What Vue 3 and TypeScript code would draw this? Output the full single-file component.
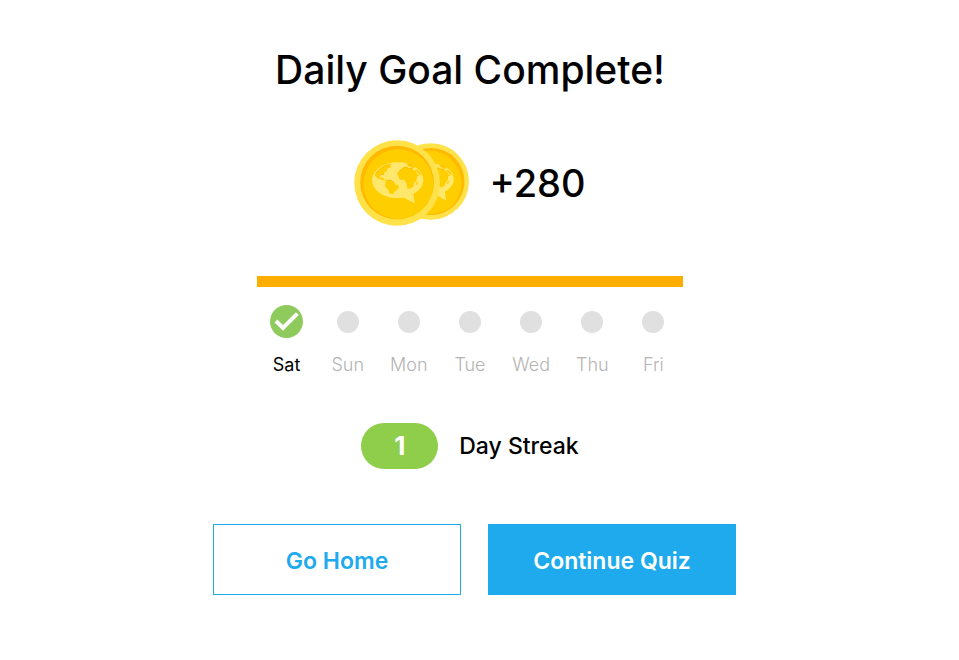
<script setup lang="ts">
interface Day {
  label: string
  done: boolean
}

const reward = 280
const streak = 1
const days: Day[] = ['Sat', 'Sun', 'Mon', 'Tue', 'Wed', 'Thu', 'Fri'].map((label, i) => ({
  label,
  done: i < streak,
}))
</script>

<template>
  <main class="goal">
    <h1 class="title">Daily Goal Complete!</h1>

    <div class="reward">
      <svg class="coins" viewBox="30 29 345 259" aria-hidden="true">
        <defs>
          <g id="globe">
            <path fill="#ffe76b" d="M161 96C204 96 238 120 238 150C238 167 226 181 208 191L212 220L179 202C173 204 167 204 161 204C118 204 84 180 84 150C84 120 118 96 161 96Z" />
            <g fill="#ffce00">
              <path d="M92 136C97 122 110 110 128 103L143 102L137 107L142 110L132 114L127 124L120 127L119 133L110 132L104 136L107 142L118 143L121 148L130 149L123 152L110 147L100 144Z" />
              <path d="M126 152L139 150L146 156L152 158L154 163L164 166L163 174L158 181L151 185L148 191L137 192L132 178L124 171L123 162Z" />
              <path d="M161 133L166 121L175 115L178 110L188 109L193 114L204 114L209 119L215 124L221 133L227 136L219 139L217 153L211 158L208 169L198 176L190 175L187 159L181 149L167 149Z" />
              <path d="M188 103L199 102L213 110L210 114L199 111L193 107Z" />
              <path d="M216 117L228 127L232 136L225 132L220 125L213 121Z" />
              <path d="M216 158L222 153L220 162L215 165Z" />
            </g>
            <path d="M94 134C103 116 116 108 139 103M120 128L118 133L108 132L105 140M127 152L139 150L150 157M161 133L167 121L178 113L189 112L194 115L206 115M190 103L202 104L212 111M218 119L229 131" fill="none" stroke="#ffbd08" stroke-width="3" />
          </g>
          <clipPath id="rear"><circle cx="261" cy="154" r="98" /></clipPath>
        </defs>
        <circle cx="260" cy="154" r="115.500" fill="#ffe14a" />
        <circle cx="261" cy="154" r="101" fill="#ffb900" />
        <g clip-path="url(#rear)">
          <circle cx="255" cy="159" r="98" fill="#ffce00" />
        </g>
        <use href="#globe" transform="translate(117 14) scale(.895)" />
        <circle cx="159" cy="158.500" r="129" fill="#ffe14a" />
        <circle cx="159" cy="157" r="111" fill="#ffb900" />
        <circle cx="163" cy="162" r="105" fill="#ffce00" />
        <use href="#globe" />
      </svg>
      <span class="amount">+{{ reward }}</span>
    </div>

    <section class="week" aria-label="Week">
      <div class="bar"></div>
      <ul class="days">
        <li v-for="day in days" :key="day.label" class="day" :class="{ done: day.done }">
          <span class="mark">
            <svg v-if="day.done" class="check" viewBox="0 0 99 99" aria-hidden="true">
              <circle cx="49.500" cy="49.500" r="49.500" fill="#8fca5c" />
              <path d="M18 48L39 69L82 26" fill="none" stroke="#fff" stroke-width="12" />
            </svg>
            <span v-else class="dot"></span>
          </span>
          <span>{{ day.label }}</span>
        </li>
      </ul>
    </section>

    <div class="streak">
      <span class="count">{{ streak }}</span>
      <span>Day Streak</span>
    </div>

    <div class="actions">
      <button type="button" class="button">Go Home</button>
      <button type="button" class="button primary">Continue Quiz</button>
    </div>
  </main>
</template>

<style>
body {
  margin: 0;
  background: #fff;
}
</style>

<style scoped>
.goal {
  display: flex;
  flex-direction: column;
  align-items: center;
  padding: 46px 19px 64px 0;
  color: #000;
  font-family: Inter, "Liberation Sans", sans-serif;
}

.title {
  margin: 0;
  font-size: 39px;
  font-weight: 500;
  line-height: 48px;
}

.reward {
  display: flex;
  align-items: center;
  gap: 20px;
  margin-top: 46px;
}

.coins {
  width: 115px;
  height: 86px;
}

.amount {
  font-size: 38px;
  font-weight: 500;
  line-height: 48px;
}

.week {
  width: 426px;
  max-width: 100%;
  margin-top: 50px;
}

.bar {
  height: 11px;
  background: #ffae00;
}

.days {
  display: grid;
  grid-template-columns: repeat(7, 1fr);
  margin: 18px -1px 0;
  padding: 0;
  list-style: none;
}

.day {
  display: flex;
  flex-direction: column;
  align-items: center;
  gap: 16px;
  color: #b4b4b4;
  font-size: 18px;
  font-weight: 300;
  line-height: 22px;
}

.day.done {
  color: #000;
  font-weight: 400;
}

.mark {
  display: flex;
  align-items: center;
  height: 33px;
}

.check {
  width: 33px;
  height: 33px;
}

.dot {
  width: 22px;
  height: 22px;
  border-radius: 50%;
  background: #e0e0e0;
}

.streak {
  display: flex;
  align-items: center;
  gap: 21px;
  margin-top: 47px;
  font-size: 23px;
  font-weight: 500;
}

.count {
  width: 77px;
  border-radius: 23px;
  background: #8fce4a;
  color: #fff;
  font-size: 26px;
  font-weight: 700;
  line-height: 46px;
  text-align: center;
}

.actions {
  display: flex;
  flex-wrap: wrap;
  justify-content: center;
  gap: 27px;
  margin: 55px 0 0 9px;
}

.button {
  width: 248px;
  padding: 20px 16px 16px;
  border: 1px solid #1eaaec;
  background: #fff;
  color: #1eaaec;
  font-family: inherit;
  font-size: 23px;
  font-weight: 600;
  line-height: 33px;
  cursor: pointer;
}

.button.primary {
  background: #1eaaec;
  color: #fff;
}
</style>
